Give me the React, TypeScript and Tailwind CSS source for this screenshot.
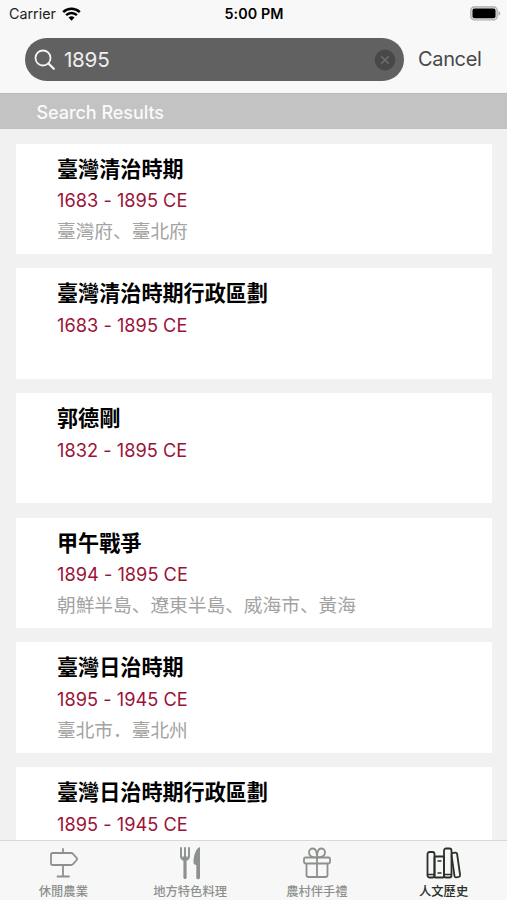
import type { ReactNode } from "react";

type Result = { title: string; years: string; place?: string };

const results: Result[] = [
  { title: "臺灣清治時期", years: "1683 - 1895 CE", place: "臺灣府、臺北府" },
  { title: "臺灣清治時期行政區劃", years: "1683 - 1895 CE" },
  { title: "郭德剛", years: "1832 - 1895 CE" },
  { title: "甲午戰爭", years: "1894 - 1895 CE", place: "朝鮮半島、遼東半島、威海市、黃海" },
  { title: "臺灣日治時期", years: "1895 - 1945 CE", place: "臺北市．臺北州" },
  { title: "臺灣日治時期行政區劃", years: "1895 - 1945 CE" },
];

function WifiIcon() {
  return (
    <svg width="19" height="14" viewBox="0 0 19 14" fill="none" stroke="#000" strokeWidth="2.5">
      <path d="M1.2 5.1a11.8 11.8 0 0 1 16.6 0" />
      <path d="M4.1 8.1a7.7 7.7 0 0 1 10.8 0" />
      <path d="M9.5 13.7 6.5 10.6a4.3 4.3 0 0 1 6 0Z" fill="#000" stroke="none" />
    </svg>
  );
}

function BatteryIcon() {
  return (
    <svg width="31" height="15" viewBox="0 0 31 15">
      <rect x="0.8" y="0.8" width="26.4" height="13.2" rx="3.6" fill="#ddd" stroke="#aaa" strokeWidth="1.2" />
      <rect x="2.5" y="2.5" width="23" height="9.8" rx="2" fill="#000" />
      <path d="M28.5 5.3c2.3.5 2.3 3.7 0 4.2Z" fill="#aaa" />
    </svg>
  );
}

function StatusBar() {
  return (
    <div className="grid h-[27px] grid-cols-3 items-center pr-[6px] pl-[9px] text-[14.3px] text-[#222]">
      <div className="flex items-center gap-[6px]">
        <span>Carrier</span>
        <WifiIcon />
      </div>
      <span className="-ml-[2px] text-center font-semibold tracking-[0.1px] text-black">5:00 PM</span>
      <div className="flex justify-end">
        <BatteryIcon />
      </div>
    </div>
  );
}

function SearchBar() {
  return (
    <div className="flex h-[66px] items-start pt-[11px]">
      <div className="ml-[25px] flex h-[43px] w-[379px] items-center rounded-full bg-[#616161] pr-[8px] pl-[9px]">
        <svg width="22" height="22" viewBox="0 0 22 22" fill="none" stroke="#f4f4f4" strokeWidth="1.8">
          <circle cx="9" cy="9" r="7.5" />
          <path d="m14.5 14.5 5.3 5.2" strokeWidth="2.3" strokeLinecap="round" />
        </svg>
        <span className="ml-[8px] flex-1 pt-px text-[20.7px] tracking-[-0.3px] text-[#efefef]">1895</span>
        <svg width="22" height="22" viewBox="0 0 22 22">
          <circle cx="11" cy="11" r="10.4" fill="#484848" />
          <path d="m7.2 7.2 7.6 7.6m0-7.6-7.6 7.6" stroke="#707070" strokeWidth="1.4" />
        </svg>
      </div>
      <button className="ml-[14px] h-[42px] text-[20px] tracking-[-0.35px] text-[#484848]">Cancel</button>
    </div>
  );
}

function ResultCard({ title, years, place }: Result) {
  return (
    <article className="h-[110.4px] shrink-0 bg-white pt-[12px] pl-[41px] whitespace-nowrap">
      <h2 className="h-[30.7px] text-[21.1px] leading-[28px] font-bold text-black">{title}</h2>
      <p className="h-[31.8px] text-[18.2px] leading-[28px] tracking-[0.02px] text-[#9b1238]">{years}</p>
      {place && <p className="text-[18.7px] leading-[28px] text-[#a3a3a3]">{place}</p>}
    </article>
  );
}

function SignIcon() {
  return (
    <svg width="30" height="32" viewBox="-1 0 30 32" fill="none" stroke="currentColor" strokeWidth="1.8" strokeLinecap="round" strokeLinejoin="round">
      <path d="M14 2v3.500M14 19v10.500M8.500 29.500h11.500" />
      <path d="M3.500 6h18.500q1.200 0 2 .8l3.700 4.200q.8 1 0 2l-3.700 4.200q-.8.800-2 .8H3.500a1.500 1.500 0 0 1-1.500-1.500v-9A1.500 1.500 0 0 1 3.500 6Z" />
    </svg>
  );
}

function CutleryIcon() {
  return (
    <svg width="22" height="34" viewBox="0 0 22 34" fill="none" stroke="currentColor" strokeLinecap="round">
      <path d="M2 2v8.500q0 3.200 4 3.200t4-3.200V2M6 2v11" strokeWidth="1.900" />
      <path d="M3 10.500h6l-1.500 4h-3Z" fill="currentColor" stroke="none" />
      <path d="M6 14v17.500" strokeWidth="3.200" />
      <path d="M21 1c-4 1-6.500 8.500-6.500 15.500 0 1.500 1 2.500 2.800 2.500v12.500a1.850 1.850 0 0 0 3.700 0Z" fill="currentColor" stroke="none" />
    </svg>
  );
}

function GiftIcon() {
  return (
    <svg width="30" height="32" viewBox="0 0 30 32" fill="none" stroke="currentColor" strokeWidth="1.8" strokeLinejoin="round">
      <rect x="2" y="10.500" width="26" height="6" rx="1.500" />
      <path d="M4.500 16.500v11.500a2 2 0 0 0 2 2h17a2 2 0 0 0 2-2V16.500M15 10.500V30" />
      <path d="M15 10.500c-4.500 0-8-1.200-8-5C7 3 8.600 1.500 10.800 1.500c2.800 0 4.200 3 4.200 9ZM15 10.500c4.500 0 8-1.200 8-5 0-2.500-1.600-4-3.800-4-2.800 0-4.200 3-4.200 9Z" />
    </svg>
  );
}

function BooksIcon() {
  return (
    <svg width="36" height="34" viewBox="0 0 36 34" fill="none" stroke="currentColor" strokeWidth="1.8" strokeLinejoin="round">
      <rect x="1.500" y="6" width="7" height="25.500" rx="2" />
      <rect x="8.500" y="10.500" width="9.500" height="21" rx="1" />
      <rect x="18" y="2.500" width="7.500" height="29" rx="2" />
      <path d="m25.500 8 .8-.9 2.800-.4q1.700-.2 2 1.300l3 21q.2 1.600-1.200 1.900l-2.600.4q-1.500.2-1.800-1.200L25.500 9" />
      <path d="M11.500 15h4M11.500 27h4M1.500 28.500h7M18 28.500h7.500" strokeWidth="1.400" />
    </svg>
  );
}

function Tab({ label, active, children }: { label: string; active?: boolean; children: ReactNode }) {
  return (
    <a className={`flex flex-col items-center pt-[4px] ${active ? "text-[#293029]" : "text-[#8d918d]"}`}>
      <span className="flex h-[35px] items-center">{children}</span>
      <span className="mt-[4px] text-[12.3px] leading-[16px] font-medium">{label}</span>
    </a>
  );
}

export default function App() {
  return (
    <div className="flex h-[900px] w-[507px] flex-col overflow-hidden bg-[#f1f1f1] font-['Inter','Noto_Sans_CJK_SC',sans-serif]">
      <header className="h-[93px] shrink-0 bg-[#f8f8f8]">
        <StatusBar />
        <SearchBar />
      </header>
      <div className="flex h-[36px] shrink-0 items-center border-t border-[#bbb] bg-[#c3c3c3] pt-px pl-[36.5px] text-[18px] font-medium tracking-[-0.05px] text-[#fafafa]">
        Search Results
      </div>
      <main className="flex min-h-0 flex-1 flex-col gap-[14.3px] overflow-hidden pt-[14.5px] pr-[15px] pl-[16px]">
        {results.map((result) => (
          <ResultCard key={result.title} {...result} />
        ))}
      </main>
      <nav className="grid h-[60px] shrink-0 grid-cols-4 border-t border-[#d9d9d9] bg-[#f7f7f7]">
        <Tab label="休閒農業"><SignIcon /></Tab>
        <Tab label="地方特色料理"><CutleryIcon /></Tab>
        <Tab label="農村伴手禮"><GiftIcon /></Tab>
        <Tab label="人文歷史" active><BooksIcon /></Tab>
      </nav>
    </div>
  );
}
